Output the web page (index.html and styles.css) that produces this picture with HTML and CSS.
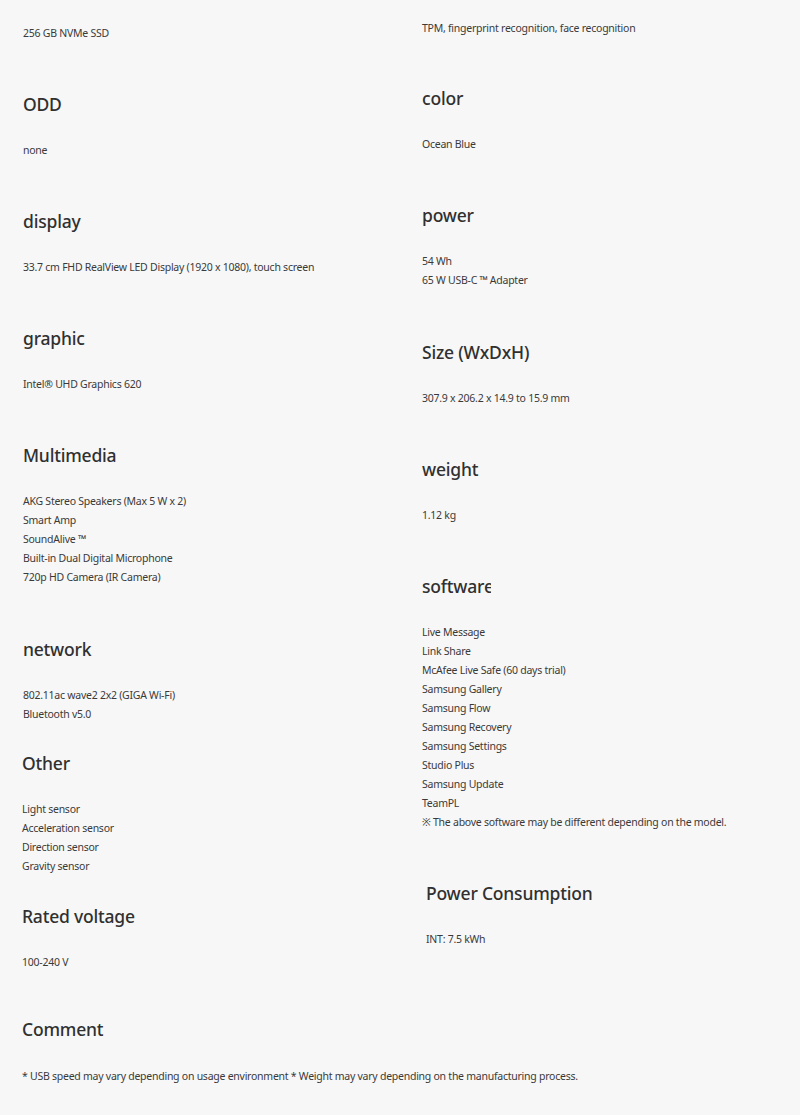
FILE: index.html
```html
<!DOCTYPE html>
<html lang="en">
<head>
<meta charset="utf-8">
<title>Specifications</title>
<link rel="stylesheet" href="styles.css">
</head>
<body>
<div class="specs">
  <div class="col col--left">
    <div class="item item--lead">
      <div class="values"><p>256 GB NVMe SSD</p></div>
    </div>
    <div class="item">
      <h3 class="title">ODD</h3>
      <div class="values"><p>none</p></div>
    </div>
    <div class="item">
      <h3 class="title">display</h3>
      <div class="values"><p>33.7 cm FHD RealView LED Display (1920 x 1080), touch screen</p></div>
    </div>
    <div class="item">
      <h3 class="title">graphic</h3>
      <div class="values"><p>Intel® UHD Graphics 620</p></div>
    </div>
    <div class="item">
      <h3 class="title">Multimedia</h3>
      <div class="values">
        <p>AKG Stereo Speakers (Max 5 W x 2)</p>
        <p>Smart Amp</p>
        <p>SoundAlive ™</p>
        <p>Built-in Dual Digital Microphone</p>
        <p>720p HD Camera (IR Camera)</p>
      </div>
    </div>
    <div class="item item--tight">
      <h3 class="title">network</h3>
      <div class="values">
        <p>802.11ac wave2 2x2 (GIGA Wi-Fi)</p>
        <p>Bluetooth v5.0</p>
      </div>
    </div>
    <div class="item item--tight-plus item--shift">
      <h3 class="title">Other</h3>
      <div class="values">
        <p>Light sensor</p>
        <p>Acceleration sensor</p>
        <p>Direction sensor</p>
        <p>Gravity sensor</p>
      </div>
    </div>
    <div class="item item--last item--shift">
      <h3 class="title">Rated voltage</h3>
      <div class="values"><p>100-240 V</p></div>
    </div>
  </div>

  <div class="col col--right">
    <div class="item item--lead-right">
      <div class="values"><p>TPM, fingerprint recognition, face recognition</p></div>
    </div>
    <div class="item">
      <h3 class="title">color</h3>
      <div class="values"><p>Ocean Blue</p></div>
    </div>
    <div class="item">
      <h3 class="title">power</h3>
      <div class="values">
        <p>54 Wh</p>
        <p>65 W USB-C ™ Adapter</p>
      </div>
    </div>
    <div class="item">
      <h3 class="title">Size (WxDxH)</h3>
      <div class="values"><p>307.9 x 206.2 x 14.9 to 15.9 mm</p></div>
    </div>
    <div class="item">
      <h3 class="title">weight</h3>
      <div class="values"><p>1.12 kg</p></div>
    </div>
    <div class="item">
      <h3 class="title title--clip">software</h3>
      <div class="values">
        <p>Live Message</p>
        <p>Link Share</p>
        <p>McAfee Live Safe (60 days trial)</p>
        <p>Samsung Gallery</p>
        <p>Samsung Flow</p>
        <p>Samsung Recovery</p>
        <p>Samsung Settings</p>
        <p>Studio Plus</p>
        <p>Samsung Update</p>
        <p>TeamPL</p>
        <p>※ The above software may be different depending on the model.</p>
      </div>
    </div>
    <div class="item item--last item--indent">
      <h3 class="title">Power Consumption</h3>
      <div class="values"><p>INT: 7.5 kWh</p></div>
    </div>
  </div>

  <div class="item item--comment">
    <h3 class="title title--comment">Comment</h3>
    <div class="values"><p>* USB speed may vary depending on usage environment * Weight may vary depending on the manufacturing process.</p></div>
  </div>
</div>
</body>
</html>
```

FILE: styles.css
```css
html, body {
  margin: 0;
  padding: 0;
  background: #f7f7f7;
}

body {
  font-family: "Noto Sans", "Liberation Sans", Arial, sans-serif;
  color: #363636;
}

.specs {
  display: grid;
  grid-template-columns: 399px 1fr;
  padding-left: 23px;
}

.col {
  display: flex;
  flex-direction: column;
}

.item {
  margin-bottom: 49.3px;
}

.item--lead {
  padding-top: 24px;
  margin-bottom: 48.5px;
}

.item--lead-right {
  padding-top: 19px;
  margin-bottom: 48px;
}

.item--tight {
  margin-bottom: 27px;
}

.item--tight-plus {
  margin-bottom: 28px;
}

.item--last {
  margin-bottom: 0;
}

.item--shift {
  margin-left: -1px;
}

.item--indent {
  margin-left: 4px;
}

.item--comment {
  grid-column: 1 / -1;
  margin-left: -1px;
  margin-top: 45px;
  margin-bottom: 0;
  padding-bottom: 30px;
}

.title {
  margin: 0 0 25px;
  font-size: 17.5px;
  line-height: 24px;
  font-weight: 500;
  letter-spacing: -0.2px;
  color: #303030;
  white-space: nowrap;
}

.title--comment {
  margin-bottom: 26px;
}

.title--clip {
  width: 69px;
  overflow: hidden;
}

.values p {
  margin: 0;
  font-size: 10.5px;
  line-height: 19px;
  letter-spacing: -0.25px;
  color: #3a3a3a;
}
```
